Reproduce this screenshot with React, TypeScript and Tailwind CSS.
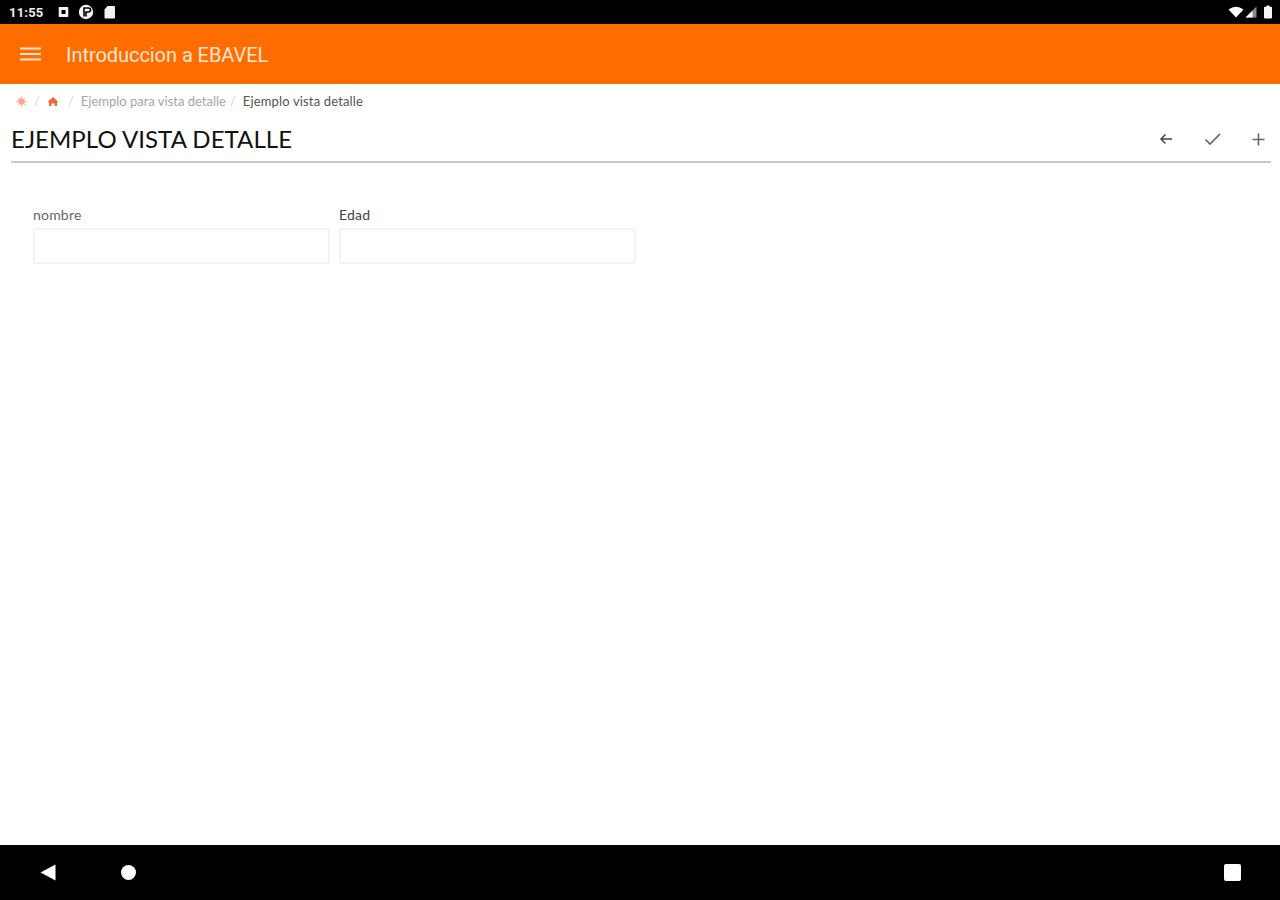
import React from "react";

function StatusBar() {
  return (
    <div className="h-6 bg-black flex items-center justify-between pl-[9px] pr-[7px] text-white shrink-0">
      <div className="flex items-center">
        <span className="text-[13px] font-bold font-['Roboto',sans-serif] w-[36px] leading-none tracking-[0.2px] text-[#eeeeee]">11:55</span>
        <svg className="ml-[13px]" width="11" height="12" viewBox="0 0 11 12"><path fillRule="evenodd" d="M1.500 1h8a.8.8 0 0 1 .8.8v8.400a.8.8 0 0 1-.8.8h-8a.8.8 0 0 1-.8-.8V1.800a.8.8 0 0 1 .8-.8zM3.500 4v4h4V4z" fill="#f2f2f2" /></svg>
        <svg className="ml-[9px]" width="16" height="16" viewBox="0 0 16 16"><circle cx="8" cy="8" r="7.200" fill="#f5f5f5" /><path d="M6 12.500V4h4.500a2 2 0 0 1 0 4H8v4.500" fill="none" stroke="#000" strokeWidth="1.600" /></svg>
        <svg className="ml-[9px]" width="13" height="14" viewBox="0 0 13 14"><path d="M4.500 1H11a1 1 0 0 1 1 1v10.500a1 1 0 0 1-1 1H2.500a1 1 0 0 1-1-1V4.500z" fill="#f2f2f2" /></svg>
      </div>
      <div className="flex items-center">
        <svg width="16" height="12" viewBox="0 0 16 12"><path d="M0.500 3.500Q8-2 15.500 3.500L8 11.500z" fill="#fff" /></svg>
        <svg className="ml-[1px]" width="12" height="12" viewBox="0 0 12 12"><path d="M11.500 0.500V11.500H0.500z" fill="#8a8a8a" /><path d="M7.500 4.700V11.500H0.500z" fill="#fff" /></svg>
        <svg className="ml-[6px]" width="10" height="14" viewBox="0 0 10 14"><path d="M3.500 0.500h3v1.200H8a1 1 0 0 1 1 1V12.500a1 1 0 0 1-1 1H2a1 1 0 0 1-1-1V2.700a1 1 0 0 1 1-1h1.500z" fill="#f5f5f5" /></svg>
      </div>
    </div>
  );
}

function Header() {
  return (
    <header className="h-[60px] bg-[#ff6d00] flex items-center pl-5 shrink-0">
      <svg width="21" height="14" viewBox="0 0 21 14" className="text-[#ffe6d2]">
        <path d="M0 1.500H21M0 7H21M0 12.500H21" stroke="currentColor" strokeWidth="2" />
      </svg>
      <h1 className="ml-[25px] mt-[2px] text-[20px] leading-none font-['Roboto',sans-serif] text-[#ffe6d2] tracking-[-0.05px]">Introduccion a EBAVEL</h1>
    </header>
  );
}

function Breadcrumbs() {
  return (
    <nav className="h-[37px] flex items-center pl-[16px] pb-[2px] text-[13px] font-['Lato',sans-serif] leading-none shrink-0">
      <svg width="11" height="11" viewBox="0 0 11 11" fill="none" stroke="#ffa890" strokeWidth="1.500"><circle cx="5.500" cy="5.500" r="2.500" fill="#ffa890" /><path d="M5.500 0.500V10.500M0.500 5.500H10.500M2 2 9 9M9 2 2 9" strokeWidth="1" /></svg>
      <span className="ml-[7px] text-[#d5d5d5]">/</span>
      <svg className="ml-[7px]" width="12" height="11" viewBox="0 0 12 11"><path d="M6 1 11.500 6H10v4H7.500V7.500h-3V10H2V6H0.500z" fill="#f4683c" /></svg>
      <span className="ml-[9px] text-[#d5d5d5]">/</span>
      <span className="ml-[7px] text-[#a6a6a6]">Ejemplo para vista detalle</span>
      <span className="ml-[4px] text-[#d5d5d5]">/</span>
      <span className="ml-[7px] text-[#555555] tracking-[0.15px]">Ejemplo vista detalle</span>
    </nav>
  );
}

function TitleRow() {
  return (
    <div className="ml-[11px] mr-[9px] h-[42px] pb-[4px] border-b-2 border-[#c9c9c9] flex items-center justify-between shrink-0">
      <h2 className="text-[24px] leading-none font-['Lato',sans-serif] text-[#111111] tracking-[0.05px]">EJEMPLO VISTA DETALLE</h2>
      <div className="flex items-center text-[#444444]">
        <svg width="14" height="14" viewBox="0 0 14 14" fill="none" stroke="currentColor" strokeWidth="1.500"><path d="M13 7H2M6.500 2.500 2 7l4.500 4.500" /></svg>
        <svg className="ml-[31px]" width="17" height="14" viewBox="0 0 17 14" fill="none" stroke="#666666" strokeWidth="1.700"><path d="M1.500 7.500 6 12 16 2" /></svg>
        <svg className="ml-[31px] mr-[6px]" width="13" height="13" viewBox="0 0 13 13" fill="none" stroke="#666666" strokeWidth="1.600"><path d="M6.500 0.500V12.500M0.500 6.500H12.500" /></svg>
      </div>
    </div>
  );
}

function Field({ label, dark }: { label: string; dark?: boolean }) {
  return (
    <div className="w-[297px]">
      <label className={`block text-[14px] leading-4 font-['Lato',sans-serif] mb-[5px] tracking-[0.2px] ${dark ? "text-[#444444]" : "text-[#666666]"}`}>{label}</label>
      <input className="block w-full h-[36px] bg-white border-2 border-[#f3f3f3] rounded-[3px] outline-none" />
    </div>
  );
}

function NavBar() {
  return (
    <div className="h-[55px] bg-black flex items-center justify-between pl-[40px] pr-[39px] shrink-0">
      <div className="flex items-center">
        <svg width="16" height="17" viewBox="0 0 16 17"><path d="M15.500 0.500V16.500L0.500 8.500z" fill="#fff" /></svg>
        <div className="ml-[65px] w-[15px] h-[15px] rounded-full bg-white" />
      </div>
      <div className="w-[17px] h-[17px] rounded-[2px] bg-white" />
    </div>
  );
}

export default function App() {
  return (
    <div className="w-[1280px] h-[900px] flex flex-col bg-white overflow-hidden">
      <StatusBar />
      <Header />
      <Breadcrumbs />
      <TitleRow />
      <main className="flex-1 pl-[33px] pt-[44px]">
        <div className="flex gap-[9px]">
          <Field label="nombre" />
          <Field label="Edad" dark />
        </div>
      </main>
      <NavBar />
    </div>
  );
}
